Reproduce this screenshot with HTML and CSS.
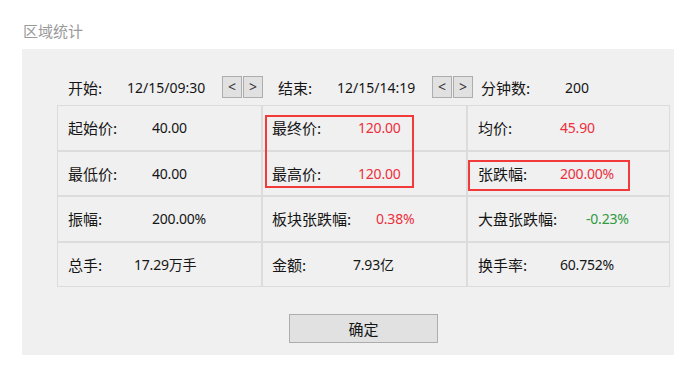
FILE: index.html
```html
<!DOCTYPE html>
<html lang="zh-CN">
<head>
  <meta charset="UTF-8">
  <title>区域统计</title>
  <link rel="stylesheet" href="styles.css">
</head>
<body>

  <div class="dlg-title">区域统计</div>

  <div class="dlg-panel">
    <div class="range-bar">
      <div class="range-group first">
        <span class="range-label">开始:</span>
        <span class="range-value">12/15/09:30</span>
        <button class="step-btn">&lt;</button><button class="step-btn">&gt;</button>
      </div>
      <div class="range-group">
        <span class="range-label">结束:</span>
        <span class="range-value">12/15/14:19</span>
        <button class="step-btn">&lt;</button><button class="step-btn">&gt;</button>
      </div>
      <div class="range-group">
        <span class="range-label count">分钟数:</span>
        <span class="range-value">200</span>
      </div>
    </div>

    <div class="stat-grid">
      <div class="cell c1"><span class="lbl">起始价:</span><span class="val">40.00</span></div>
      <div class="cell c2"><span class="lbl">最终价:</span><span class="val up">120.00</span></div>
      <div class="cell c3"><span class="lbl">均价:</span><span class="val up">45.90</span></div>

      <div class="cell c1"><span class="lbl">最低价:</span><span class="val">40.00</span></div>
      <div class="cell c2"><span class="lbl">最高价:</span><span class="val up">120.00</span></div>
      <div class="cell c3"><span class="lbl">张跌幅:</span><span class="val up">200.00%</span></div>

      <div class="cell c1"><span class="lbl">振幅:</span><span class="val">200.00%</span></div>
      <div class="cell c2"><span class="lbl wide">板块张跌幅:</span><span class="val up">0.38%</span></div>
      <div class="cell c3"><span class="lbl wide3">大盘张跌幅:</span><span class="val down">-0.23%</span></div>

      <div class="cell c1"><span class="lbl short">总手:</span><span class="val">17.29万手</span></div>
      <div class="cell c2"><span class="lbl short2">金额:</span><span class="val">7.93亿</span></div>
      <div class="cell c3"><span class="lbl">换手率:</span><span class="val">60.752%</span></div>

      <div class="mark mark-price"></div>
      <div class="mark mark-change"></div>
    </div>

    <div class="btn-row">
      <button class="ok-btn">确定</button>
    </div>
  </div>

</body>
</html>
```

FILE: styles.css
```css
body { margin: 0; padding: 21px 0 0 22px; background: #ffffff; font-family: "Noto Sans CJK SC", "Noto Sans", sans-serif; color: #151515; }
.dlg-title { font-size: 15px; line-height: 20px; color: #9a9a9a; padding-left: 1px; }
.dlg-panel { width: 652px; height: 306px; box-sizing: border-box; margin-top: 8px; background: #f0f0f0; padding: 27px 0 0 35px; }

.range-bar { display: flex; align-items: center; height: 22px; margin-bottom: 7px; padding-left: 11px; font-size: 15px; }
.range-group { display: flex; align-items: center; }
.range-group.first { margin-right: 14px; }
.range-group + .range-group { margin-right: 7px; }
.range-label { width: 59px; }
.range-label.count { width: 84px; }
.range-value { width: 95px; font-family: "Noto Sans", sans-serif; font-size: 14px; }
.step-btn { width: 20px; height: 22px; margin: 0 1px 0 0; padding: 0; background: #e1e1e1; border: 1px solid #adadad; font-family: "Noto Sans", sans-serif; font-size: 14px; color: #333; line-height: 18px; }

.stat-grid { position: relative; display: grid; grid-template-columns: 205px 205px 203px; grid-auto-rows: 45.5px; width: 613px; }
.cell { display: flex; align-items: center; border: 1px solid #dcdcdc; font-size: 15px; }
.c1 { padding-left: 10px; }
.c2 { padding-left: 9px; }
.c3 { padding-left: 10px; }
.c1 .lbl { width: 84px; }
.c2 .lbl { width: 86px; }
.c3 .lbl { width: 82px; }
.c1 .lbl.short { width: 66px; }
.c2 .lbl.short2 { width: 81px; }
.c2 .lbl.wide { width: 104px; }
.c3 .lbl.wide3 { width: 108px; }
.val { font-family: "Noto Sans", "Noto Sans CJK SC", sans-serif; font-size: 14px; letter-spacing: -0.2px; }
.val.up { color: #ec2f3d; }
.val.down { color: #2f9a3e; }

.mark { position: absolute; border: 2px solid #f23a3a; box-sizing: border-box; }
.mark-price { left: 208px; top: 10px; width: 149px; height: 73px; }
.mark-change { left: 411px; top: 55px; width: 162px; height: 31px; }

.btn-row { display: flex; justify-content: center; width: 613px; margin-top: 27px; }
.ok-btn { width: 149px; height: 29px; background: #e1e1e1; border: 1px solid #adadad; font-family: "Noto Sans CJK SC", sans-serif; font-size: 15px; color: #151515; padding: 0; }
```
